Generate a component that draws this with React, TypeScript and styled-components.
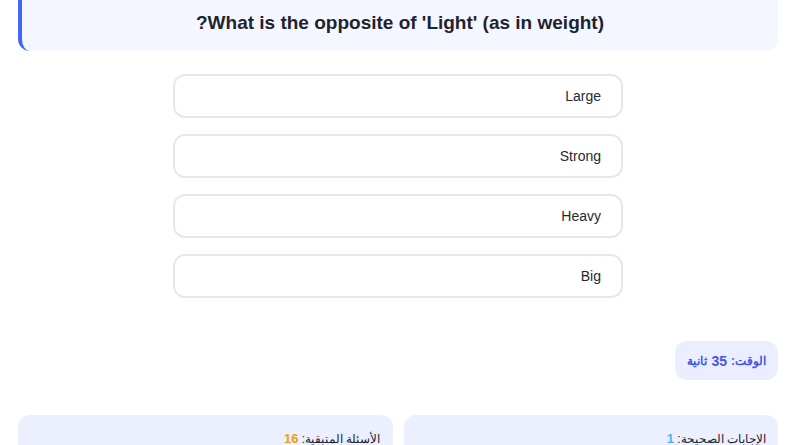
import React from "react"
import styled, { createGlobalStyle } from "styled-components"

const GlobalStyle = createGlobalStyle`
	html, body {
		margin: 0;
		padding: 0;
		background: #ffffff;
		font-family: "Liberation Sans", Arial, sans-serif;
		overflow: hidden;
	}
`

const options = ["Large", "Strong", "Heavy", "Big"]

const App: React.FC = () => {
	return (
		<>
			<GlobalStyle />
			<Page dir="rtl">
				<QuestionCard>
					<QuestionText>What is the opposite of 'Light' (as in weight)?</QuestionText>
				</QuestionCard>
				<OptionList>
					{options.map(option => (
						<OptionButton key={option}>{option}</OptionButton>
					))}
				</OptionList>
				<TimerRow>
					<TimerBadge>
						الوقت: <strong>35</strong> ثانية
					</TimerBadge>
				</TimerRow>
				<StatsGrid>
					<StatCard>
						الإجابات الصحيحة: <StatValue tone="#4fb3ea">1</StatValue>
					</StatCard>
					<StatCard>
						الأسئلة المتبقية: <StatValue tone="#f59e0b">16</StatValue>
					</StatCard>
				</StatsGrid>
			</Page>
		</>
	)
}

const Page = styled.div`
	display: flex;
	flex-direction: column;
	margin-top: -11px;
	padding: 0 15px 0 18px;
`

const QuestionCard = styled.div`
	background: #f4f7ff;
	border-left: 4px solid #4466f2;
	border-radius: 12px;
	padding: 23px 20px 17px;
	text-align: center;
`

const QuestionText = styled.h2`
	margin: 0;
	font-size: 19px;
	font-weight: 700;
	line-height: 22px;
	color: #1f2330;
`

const OptionList = styled.div`
	display: flex;
	flex-direction: column;
	gap: 16px;
	width: 450px;
	margin: 23px auto 0;
`

const OptionButton = styled.button`
	height: 44px;
	background: #ffffff;
	border: 2px solid #e6e8ec;
	border-radius: 12px;
	padding: 0 20px;
	text-align: right;
	font-family: "Liberation Sans", Arial, sans-serif;
	font-size: 14px;
	color: #1f2937;
	cursor: pointer;
`

const TimerRow = styled.div`
	display: flex;
	margin-top: 43px;
`

const TimerBadge = styled.div`
	background: #eaeefe;
	border-radius: 12px;
	padding: 0 12px;
	height: 39px;
	display: flex;
	align-items: center;
	gap: 4px;
	font-size: 12px;
	font-weight: 700;
	color: #4257ea;

	strong {
		font-size: 14px;
	}
`

const StatsGrid = styled.div`
	display: grid;
	grid-template-columns: 1fr 1fr;
	gap: 11px;
	margin-top: 35px;
`

const StatCard = styled.div`
	background: #eceffd;
	border-radius: 12px;
	padding: 16px 12px;
	height: 60px;
	font-size: 12px;
	color: #1f2330;
`

const StatValue = styled.span<{ tone: string }>`
	color: ${(props): string => props.tone};
	font-weight: 700;
	font-size: 13px;
`

export default App
